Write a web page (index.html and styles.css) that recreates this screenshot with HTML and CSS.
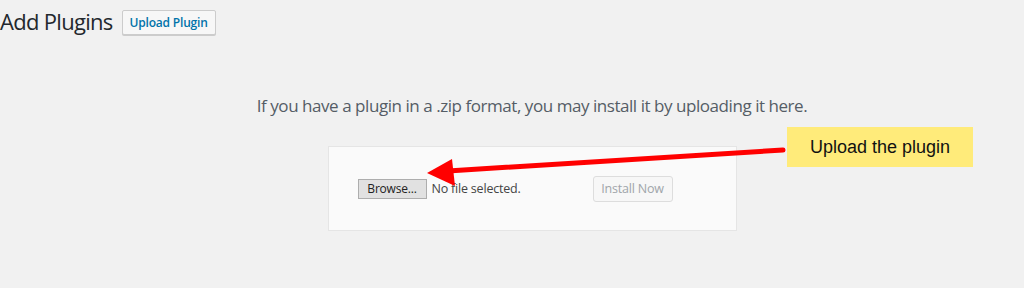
FILE: index.html
```html
<!DOCTYPE html>
<html>
<head>
<meta charset="utf-8">
<link rel="stylesheet" href="styles.css">
</head>
<body>
<div class="wrap">
  <header class="head">
    <h1 class="title">Add Plugins</h1>
    <button class="upload-btn">Upload Plugin</button>
  </header>
  <main class="main">
    <p class="intro">If you have a plugin in a .zip format, you may install it by uploading it here.</p>
    <div class="upload-box">
      <div class="file">
        <button class="browse">Browse...</button>
        <span class="nofile">No file selected.</span>
      </div>
      <button class="install" disabled>Install Now</button>
    </div>
  </main>
  <svg class="arrow" width="1024" height="288" viewBox="0 0 1024 288">
    <line x1="448" y1="171" x2="783" y2="150" stroke="#ff0000" stroke-width="5" stroke-linecap="round"/>
    <polygon points="427,173 452,159 455,186" fill="#ff0000"/>
  </svg>
  <div class="note">Upload the plugin</div>
</div>
</body>
</html>
```
FILE: styles.css
```css
html, body {
  margin: 0;
  padding: 0;
  background: #f1f1f1;
}
.wrap {
  position: relative;
  width: 1024px;
  height: 288px;
  overflow: hidden;
  font-family: "Open Sans", "Noto Sans", sans-serif;
}
.head {
  display: flex;
  align-items: center;
  gap: 9px;
  padding-top: 7px;
  height: 28px;
}
.title {
  margin: 0;
  font-size: 22px;
  font-weight: 400;
  color: #23282d;
  letter-spacing: -0.7px;
  line-height: 28px;
}
.upload-btn {
  height: 25px;
  padding: 0 7px;
  background: #f7f7f7;
  border: 1px solid #cccccc;
  border-radius: 2px;
  box-shadow: 0 1px 0 #cccccc;
  color: #0073aa;
  font-family: "Open Sans", sans-serif;
  font-size: 12px;
  font-weight: 600;
  letter-spacing: -0.2px;
  margin-top: 2px;
}
.main {
  padding-left: 40px;
  display: flex;
  flex-direction: column;
  align-items: center;
}
.intro {
  margin: 59px 0 0;
  font-size: 17px;
  line-height: 23px;
  color: #555d66;
  letter-spacing: -0.45px;
}
.upload-box {
  margin-top: 29px;
  height: 83px;
  background: #fafafa;
  border: 1px solid #e5e5e5;
  display: flex;
  align-items: center;
  padding-left: 29px;
  box-sizing: content-box;
  width: 378px;
}
.file {
  display: flex;
  align-items: center;
  gap: 5px;
  width: 235px;
}
.browse {
  height: 20px;
  width: 69px;
  padding: 0;
  background: #e1e1e1;
  border: 1px solid #adadad;
  font-family: "Open Sans", sans-serif;
  font-size: 12px;
  color: #222;
  letter-spacing: -0.2px;
}
.nofile {
  font-size: 12.5px;
  color: #444;
  letter-spacing: -0.2px;
}
.install {
  height: 26px;
  width: 80px;
  padding: 0;
  background: #f7f7f7;
  border: 1px solid #dddddd;
  border-radius: 3px;
  color: #a0a5aa;
  font-family: "Open Sans", sans-serif;
  font-size: 12.5px;
  letter-spacing: -0.2px;
}
.arrow {
  position: absolute;
  left: 0;
  top: 0;
  pointer-events: none;
}
.note {
  position: absolute;
  left: 787px;
  top: 127px;
  width: 186px;
  height: 40px;
  background: #ffeb7a;
  box-sizing: border-box;
  padding-left: 23px;
  display: flex;
  align-items: center;
  font-family: "Liberation Sans", Arial, sans-serif;
  font-size: 18px;
  color: #111;
}
```
